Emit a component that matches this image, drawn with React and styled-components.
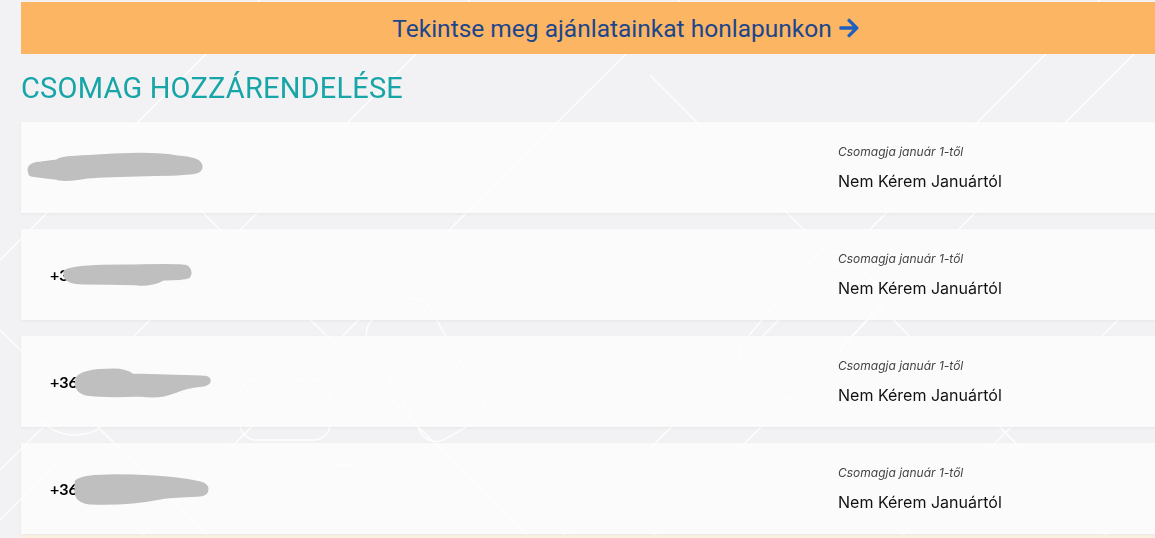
import styled, { createGlobalStyle } from 'styled-components'
import { FaArrowRight } from 'react-icons/fa'

const GlobalStyle = createGlobalStyle`
	html, body {
		margin: 0;
		padding: 0;
		background: #f2f2f4;
		overflow: hidden;
		font-family: 'Roboto', 'Liberation Sans', sans-serif;
	}
`

const packages = [
	{ id: 1, phone: '', blob: 'a' },
	{ id: 2, phone: '+36', blob: 'b' },
	{ id: 3, phone: '+36', blob: 'c' },
	{ id: 4, phone: '+36', blob: 'd' },
]

// grey scribbles that hide the phone numbers
const blobs = {
	a: { w: 178, h: 30, x: -24, y: -4, d: 'M4 19 C4 15 9 13 15 13 L31 11 C35 7 51 7 71 6 C101 4 131 3 151 7 C161 8 173 9 174 15 C175 21 167 21 151 22 C121 23 91 23 61 25 C51 27 41 28 33 27 C29 25 11 25 5 23 Z' },
	b: { w: 132, h: 24, x: -17, y: 0, d: 'M5 9 C12 5 32 4 62 4 C82 4 102 3 122 4 C128 4 129 10 127 13 C122 15 112 15 102 15 C97 18 87 21 77 20 C62 19 42 19 22 19 C10 19 4 16 5 9 Z' },
	c: { w: 140, h: 30, x: -6, y: 2, d: 'M6 11 C8 6 22 3 42 3 C50 3 56 5 60 8 L130 10 C138 10 138 14 132 16 C120 17 110 19 102 23 C92 27 80 28 68 26 C48 27 28 27 14 25 C6 23 4 17 6 11 Z' },
	d: { w: 138, h: 31, x: -6, y: 2, d: 'M5 8 C10 3 32 2 62 3 C92 4 112 6 128 10 C136 12 136 19 128 20 C112 21 98 21 88 23 C68 27 42 29 18 28 C8 27 5 23 5 17 Z' },
}

const Decor = () => (
	<Background viewBox='0 0 1155 538' preserveAspectRatio='none'>
		<g stroke='#ffffff' strokeWidth='1.5' fill='none' opacity='0.85'>
			<line x1='0' y1='470' x2='470' y2='0' />
			<line x1='0' y1='260' x2='260' y2='0' />
			<line x1='140' y1='538' x2='680' y2='0' />
			<line x1='560' y1='538' x2='1100' y2='0' />
			<line x1='650' y1='538' x2='1155' y2='33' />
			<line x1='650' y1='75' x2='1110' y2='538' />
			<line x1='160' y1='170' x2='530' y2='538' />
			<line x1='0' y1='330' x2='210' y2='538' />
			<line x1='900' y1='538' x2='1155' y2='283' />
			<line x1='0' y1='520' x2='60' y2='460' />
			<rect x='390' y='300' width='70' height='140' rx='18' transform='rotate(-30 425 370)' />
			<rect x='770' y='250' width='80' height='150' rx='20' transform='rotate(40 810 325)' />
			<rect x='240' y='380' width='90' height='60' rx='16' />
			<path d='M40 420 C60 440 90 440 110 420' />
			<path d='M300 450 C330 470 360 470 390 450' />
		</g>
	</Background>
)

const Blob = ({ kind }) => {
	const b = blobs[kind]
	return (
		<Redacted
			width={b.w}
			height={b.h}
			viewBox={`0 0 ${b.w} ${b.h}`}
			style={{ marginLeft: b.x, marginTop: b.y }}>
			<path
				d={b.d}
				fill='#bfbfbf'
				stroke='#bfbfbf'
				strokeWidth='5'
				strokeLinejoin='round'
			/>
		</Redacted>
	)
}

const App = () => {
	return (
		<>
			<GlobalStyle />
			<Decor />
			<Page>
				<Banner>
					<span>Tekintse meg ajánlatainkat honlapunkon</span>
					<FaArrowRight className='icon' />
				</Banner>
				<Title>CSOMAG HOZZÁRENDELÉSE</Title>
				<List>
					{packages.map((item) => (
						<Card key={item.id}>
							<Phone>
								{item.phone && <span>{item.phone}</span>}
								<Blob kind={item.blob} />
							</Phone>
							<Choice>
								<p className='label'>Csomagja január 1-től</p>
								<p className='value'>Nem Kérem Januártól</p>
							</Choice>
						</Card>
					))}
				</List>
				<Footer />
			</Page>
		</>
	)
}
export default App

const Background = styled.svg`
	position: fixed;
	inset: 0;
	width: 100%;
	height: 100%;
	z-index: 0;
`

const Page = styled.div`
	position: relative;
	z-index: 1;
	width: 1210px;
	padding: 2px 0 0 21px;
`

const Banner = styled.div`
	height: 52px;
	background: #fbb563;
	display: flex;
	align-items: center;
	justify-content: center;
	gap: 6px;
	color: #1c468c;
	font-size: 24.5px;
	font-family: 'Roboto', sans-serif;

	.icon {
		color: #1f5fbf;
		font-size: 22px;
	}
`

const Title = styled.h1`
	margin: 15px 0 0;
	height: 53px;
	color: #17a5a8;
	font-size: 29px;
	font-weight: 400;
	line-height: 38px;
	letter-spacing: 0.2px;
`

const List = styled.section`
	display: flex;
	flex-direction: column;
	gap: 16px;
`

const Card = styled.div`
	height: 91px;
	background: rgba(253, 253, 254, 0.82);
	box-shadow: 0 1px 3px rgba(0, 0, 0, 0.05);
	display: grid;
	grid-template-columns: 1fr 393px;
	align-items: center;
	padding-left: 29px;
`

const Phone = styled.div`
	display: flex;
	align-items: center;
	font-family: 'Lato', sans-serif;
	font-weight: 700;
	font-size: 16px;
	color: #000;
`

const Redacted = styled.svg`
	display: block;
`

const Choice = styled.div`
	align-self: start;
	padding-top: 22px;
	font-family: 'Inter', sans-serif;

	p {
		margin: 0;
	}
	.label {
		font-size: 12px;
		font-style: italic;
		color: #444;
		line-height: 16px;
	}
	.value {
		margin-top: 11px;
		font-size: 16px;
		color: #111;
		line-height: 20px;
	}
`

const Footer = styled.div`
	margin-top: 1px;
	height: 20px;
	background: #fdf2e2;
`
